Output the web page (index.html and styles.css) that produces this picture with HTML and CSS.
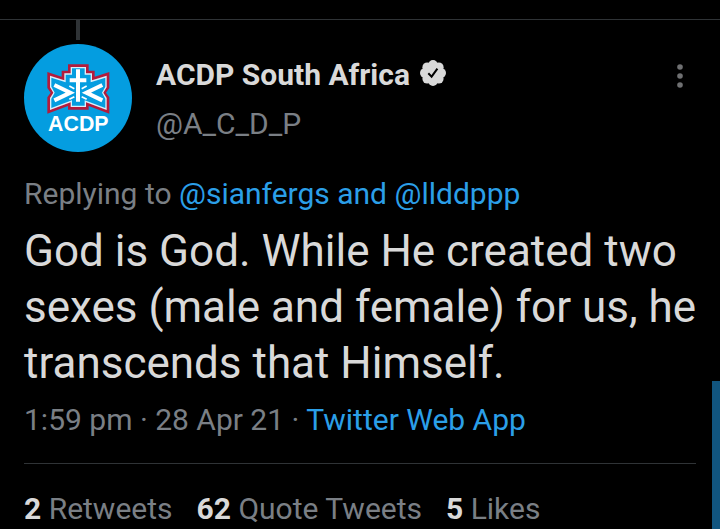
FILE: index.html
```html
<!DOCTYPE html>
<html lang="en">
<head>
  <meta charset="UTF-8">
  <meta name="viewport" content="width=device-width, initial-scale=1.0">
  <title>ACDP South Africa on Twitter</title>
  <link rel="stylesheet" href="styles.css">
</head>
<body>
  <article class="tweet">
    <header class="header">
      <div class="avatar-column">
        <div class="thread-line"></div>
        <svg class="avatar" viewBox="42 132 324 324" role="img" aria-label="ACDP logo">
          <circle cx="204" cy="294" r="162" fill="#049de0"/>
          <!-- emblem: red edge, white edge, blue field -->
          <path fill="#b31b3c" d="M112 216L155 230V212H174V193H236V212H254V230L298 216V264L288 278L298 292V341L236 318V329H174V318L112 341V292L122 278L112 264Z"/>
          <path fill="#d9f0fb" d="M120 227L163 241V220H182V201H228V220H246V241L290 227V262L280 278L290 294V330L228 307V321H182V307L120 330V294L130 278L120 262Z"/>
          <path fill="#049de0" d="M124 233L167 247V224H186V205H224V224H242V247L286 233V260L276 278L286 296V324L224 301V317H186V301L124 324V296L134 278L124 260Z"/>
          <path fill="none" stroke="#fff" stroke-width="12" d="M204 208V305M179 241H229"/>
          <path fill="none" stroke="#fff" stroke-width="12" d="M133 255L181 278L133 301M277 255L229 278L277 301"/>
          <path fill="none" stroke="#fff" stroke-width="5" d="M178 258L193 266M230 258L215 266M178 298L193 290M230 298L215 290"/>
          <text class="logo-text" x="205" y="393" text-anchor="middle">ACDP</text>
        </svg>
      </div>
      <div class="author">
        <div class="name-row">
          <span class="name">ACDP South Africa</span>
          <svg class="verified" viewBox="0 0 26 26" role="img" aria-label="Verified">
            <g fill="#d9d9d9">
              <circle cx="13" cy="13" r="10.5"/>
              <circle cx="13" cy="4.8" r="4.8"/>
              <circle cx="18.8" cy="7.2" r="4.8"/>
              <circle cx="21.2" cy="13" r="4.8"/>
              <circle cx="18.8" cy="18.8" r="4.8"/>
              <circle cx="13" cy="21.2" r="4.8"/>
              <circle cx="7.2" cy="18.8" r="4.8"/>
              <circle cx="4.8" cy="13" r="4.8"/>
              <circle cx="7.2" cy="7.2" r="4.8"/>
            </g>
            <path fill="none" stroke="#000" stroke-width="2" d="M8.3 13.2L11.6 16.6L17.4 8.6"/>
          </svg>
        </div>
        <div class="handle">@A_C_D_P</div>
      </div>
      <button class="more" type="button" aria-label="More options">
        <svg viewBox="0 0 6 24" fill="#6f7072">
          <circle cx="3" cy="3" r="2.8"/>
          <circle cx="3" cy="12" r="2.8"/>
          <circle cx="3" cy="21" r="2.8"/>
        </svg>
      </button>
    </header>

    <p class="reply">Replying to <a href="#">@sianfergs and @llddppp</a></p>
    <p class="text">God is God. While He created two sexes (male and female) for us, he transcends that Himself.</p>
    <p class="meta">1:59 pm · 28 Apr 21 · <a href="#">Twitter Web App</a></p>

    <div class="stats">
      <a href="#"><b>2</b> Retweets</a>
      <a href="#"><b>62</b> Quote Tweets</a>
      <a href="#"><b>5</b> Likes</a>
    </div>
  </article>
  <div class="edge-handle"></div>
</body>
</html>
```
FILE: styles.css
```css
* {
  box-sizing: border-box;
}
body {
  margin: 0;
  position: relative;
  min-height: 100vh;
  overflow: hidden;
  background-color: #000;
  color: #d9d9d9;
  font-family: Roboto, sans-serif;
  font-size: 30px;
  line-height: 36px;
}
p {
  margin: 0;
}
a {
  color: #2b9fe8;
  text-decoration: none;
}
.tweet {
  margin-top: 19px;
  border-top: 1px solid #2f3336;
  padding: 0 24px;
}
.header {
  display: flex;
  gap: 24px;
}
.avatar-column {
  width: 108px;
  display: flex;
  flex-direction: column;
  align-items: center;
  gap: 4px;
}
.thread-line {
  width: 4px;
  height: 20px;
  background-color: #2f3336;
}
.avatar {
  display: block;
  width: 108px;
  height: 108px;
}
.logo-text {
  font-family: "Liberation Sans", Arial, sans-serif;
  font-size: 64px;
  font-weight: bold;
  fill: #fff;
}
.author {
  flex: 1;
  padding-top: 37px;
}
.name-row {
  display: flex;
  align-items: center;
  gap: 10px;
}
.name {
  font-weight: bold;
}
.verified {
  width: 26px;
  height: 26px;
  margin-bottom: 4px;
}
.handle {
  margin-top: 13px;
}
.handle,
.reply,
.meta {
  color: #7a7f85;
}
.more {
  align-self: flex-start;
  margin-top: 44px;
  padding: 0 13px;
  border: none;
  background: none;
  cursor: pointer;
}
.more svg {
  display: block;
  width: 6px;
  height: 24px;
}
.reply {
  margin-top: 24px;
}
.text {
  margin-top: 11px;
  margin-right: -8px;
  font-size: 44px;
  line-height: 56px;
}
.meta {
  margin-top: 11px;
}
.stats {
  display: flex;
  gap: 24px;
  margin-top: 25px;
  border-top: 1px solid #2f3336;
  padding-top: 27px;
}
.stats a {
  color: #7a7f85;
  white-space: nowrap;
}
.stats b {
  color: #d9d9d9;
}
/* side panel handle, sits over the right edge */
.edge-handle {
  position: absolute;
  right: 0;
  bottom: 0;
  width: 8px;
  height: 148px;
  background-color: #11557f;
}
```
